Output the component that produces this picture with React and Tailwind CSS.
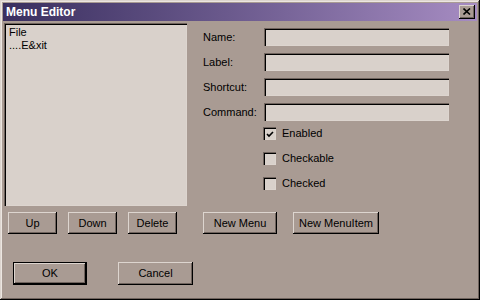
const raised = 'shadow-[inset_-1px_-1px_0_#000,inset_1px_1px_0_#ddd5cf,inset_-2px_-2px_0_#6f635d]';
const sunken = 'shadow-[inset_1px_1px_0_#6f635d,inset_2px_2px_0_#000,inset_-1px_-1px_0_#ddd5cf]';

function Button({ children, className = '', isDefault = false }) {
  return (
    <button
      className={`flex items-center justify-center bg-[#a99b93] text-[11px] text-black ${isDefault ? 'border border-black' : ''} ${className}`}
    >
      <span className={`flex h-full w-full items-center justify-center ${raised}`}>{children}</span>
    </button>
  );
}

function Field({ label }) {
  return (
    <div className="flex h-[18px] items-center">
      <span className="w-[61px] text-[11px]">{label}</span>
      <div className={`h-[18px] w-[185px] bg-[#d9d1cb] ${sunken}`} />
    </div>
  );
}

function Check({ label, checked }) {
  return (
    <div className="flex h-[13px] items-center">
      <div className={`flex h-[13px] w-[13px] items-center justify-center bg-[#d9d1cb] ${sunken}`}>
        {checked && (
          <svg width="9" height="9" viewBox="0 0 9 9" className="ml-[1px] mt-[1px]">
            <path d="M1 4 L3 6 L7 2" stroke="#000" strokeWidth="1.6" fill="none" />
          </svg>
        )}
      </div>
      <span className="ml-[6px] text-[11px]">{label}</span>
    </div>
  );
}

export default function App() {
  return (
    <div
      className="h-[300px] w-[480px] bg-[#a99b93] p-[3px] text-black shadow-[inset_-1px_-1px_0_#000,inset_1px_1px_0_#ddd5cf,inset_-2px_-2px_0_#6f635d,inset_2px_2px_0_#ece6e1]"
      style={{ fontFamily: '"Liberation Sans", Arial, sans-serif' }}
    >
      {/* title bar */}
      <div className="flex h-[18px] items-center bg-gradient-to-r from-[#3a2f5f] to-[#a68cc2] pl-[3px] pr-[2px]">
        <span className="text-[12px] font-bold text-white">Menu Editor</span>
        <div className="flex-1" />
        <div className={`flex h-[14px] w-[16px] items-center justify-center bg-[#a99b93] ${raised}`}>
          <svg width="8" height="7" viewBox="0 0 8 7" className="mb-[1px]">
            <path d="M0.5 0.5 L7 6.5 M7 0.5 L0.5 6.5" stroke="#000" strokeWidth="1.6" />
          </svg>
        </div>
      </div>

      <div className="mt-[2px] flex">
        <div className={`ml-[1px] h-[183px] w-[183px] bg-[#d9d1cb] pl-[5px] pt-[3px] text-[11px] leading-[13px] ${sunken}`}>
          <div>File</div>
          <div>....E&amp;xit</div>
        </div>
        <div className="ml-[16px] mt-[5px] flex flex-col">
          <div className="flex flex-col gap-[7px]">
            <Field label="Name:" />
            <Field label="Label:" />
            <Field label="Shortcut:" />
            <Field label="Command:" />
          </div>
          <div className="ml-[60px] mt-[6px] flex flex-col gap-[12px]">
            <Check label="Enabled" checked />
            <Check label="Checkable" />
            <Check label="Checked" />
          </div>
        </div>
      </div>

      <div className="ml-[5px] mt-[6px] flex">
        <Button className="h-[22px] w-[49px]">Up</Button>
        <Button className="ml-[11px] h-[22px] w-[49px]">Down</Button>
        <Button className="ml-[11px] h-[22px] w-[49px]">Delete</Button>
        <Button className="ml-[26px] h-[22px] w-[74px]">New Menu</Button>
        <Button className="ml-[16px] h-[22px] w-[86px]">New MenuItem</Button>
      </div>

      <div className="ml-[10px] mt-[28px] flex">
        <Button isDefault className="h-[23px] w-[74px]">OK</Button>
        <Button className="ml-[31px] h-[23px] w-[75px]">Cancel</Button>
      </div>
    </div>
  );
}
